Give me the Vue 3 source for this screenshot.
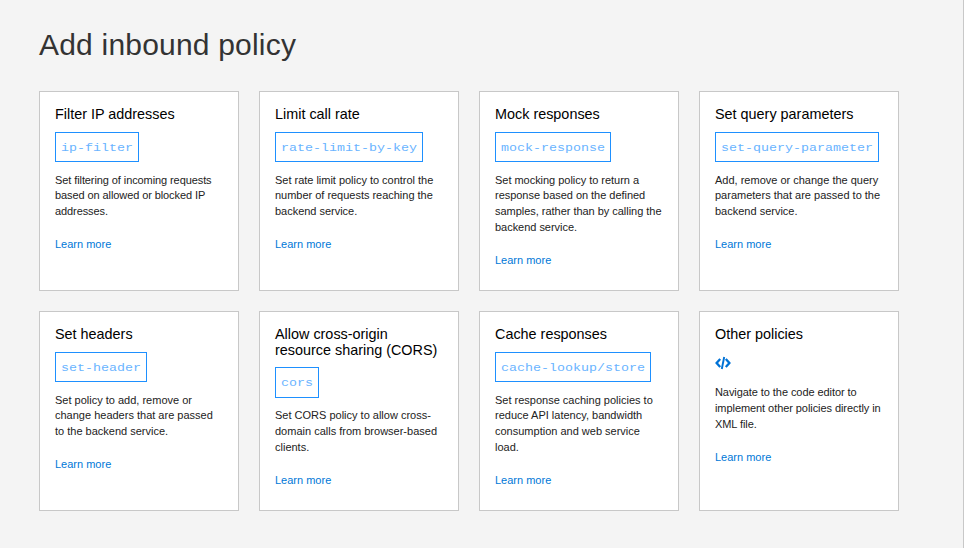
<script setup>
const policies = [
  { title: 'Filter IP addresses', code: 'ip-filter', tracking: -0.09, text: 'Set filtering of incoming requests based on allowed or blocked IP addresses.' },
  { title: 'Limit call rate', code: 'rate-limit-by-key', tracking: -0.02, text: 'Set rate limit policy to control the number of requests reaching the backend service.' },
  { title: 'Mock responses', code: 'mock-response', tracking: -0.03, text: 'Set mocking policy to return a response based on the defined samples, rather than by calling the backend service.' },
  { title: 'Set query parameters', code: 'set-query-parameter', tracking: 0, text: 'Add, remove or change the query parameters that are passed to the backend service.' },
  { title: 'Set headers', code: 'set-header', tracking: 0, text: 'Set policy to add, remove or change headers that are passed to the backend service.' },
  { title: 'Allow cross-origin resource sharing (CORS)', code: 'cors', tracking: 0, text: 'Set CORS policy to allow cross-domain calls from browser-based clients.' },
  { title: 'Cache responses', code: 'cache-lookup/store', tracking: 0, text: 'Set response caching policies to reduce API latency, bandwidth consumption and web service load.' },
  { title: 'Other policies', code: '', tracking: -0.07, text: 'Navigate to the code editor to implement other policies directly in XML file.' },
]
</script>

<template>
  <main class="page">
    <h1 class="heading">Add inbound policy</h1>
    <section class="grid">
      <article v-for="p in policies" :key="p.title" class="card">
        <h2 class="title">{{ p.title }}</h2>
        <code v-if="p.code" class="code"><span class="code-text">{{ p.code }}</span></code>
        <svg v-else class="icon" viewBox="0 0 16 14" fill="none" stroke="#0072d6">
          <path d="M5.2 3 1.6 7 5.2 11M10.8 3 14.4 7 10.8 11" stroke-width="2.3" />
          <path d="M9.2 1 6.8 13" stroke-width="1.9" />
        </svg>
        <p class="text" :style="{ letterSpacing: p.tracking + 'px' }">{{ p.text }}</p>
        <a class="link">Learn more</a>
      </article>
    </section>
  </main>
</template>

<style>
body {
  background: #f4f4f4;
}
</style>

<style scoped>
.page {
  box-sizing: border-box;
  height: 548px;
  padding: 28px 0 0 39px;
  border-right: 1px solid #c8c8c8;
  font-family: "Liberation Sans", Arial, sans-serif;
  overflow: hidden;
}
.heading {
  margin: 0 0 30px;
  font-size: 30px;
  line-height: 33px;
  font-weight: 400;
  letter-spacing: 0.2px;
  color: #333;
}
.grid {
  display: grid;
  grid-template-columns: repeat(4, 200px);
  grid-auto-rows: 200px;
  gap: 20px;
}
.card {
  box-sizing: border-box;
  display: flex;
  flex-direction: column;
  align-items: flex-start;
  padding: 15px;
  background: #fff;
  border: 1px solid #c8c8c8;
}
.title {
  margin: 0.3px 0 9.3px;
  font-size: 14.4px;
  line-height: 15.4px;
  font-weight: 400;
  color: #000;
}
.code {
  box-sizing: border-box;
  height: 30.2px;
  padding: 0 5px;
  border: 1px solid #1e90ff;
  font-family: "Courier New", "Liberation Mono", monospace;
  font-size: 13.333px;
  line-height: 28.2px;
  color: #6ab4ff;
  white-space: nowrap;
}
.code-text {
  display: block;
  transform: translateY(1.2px) scaleY(0.86);
}
.icon {
  width: 16px;
  height: 14px;
  margin: 4px 0 4.75px;
}
.text {
  margin: 10.5px 0 17.4px;
  font-size: 11px;
  line-height: 15.714px;
  color: #222;
}
.link {
  font-size: 11px;
  line-height: 15.714px;
  color: #0078d7;
}
</style>
